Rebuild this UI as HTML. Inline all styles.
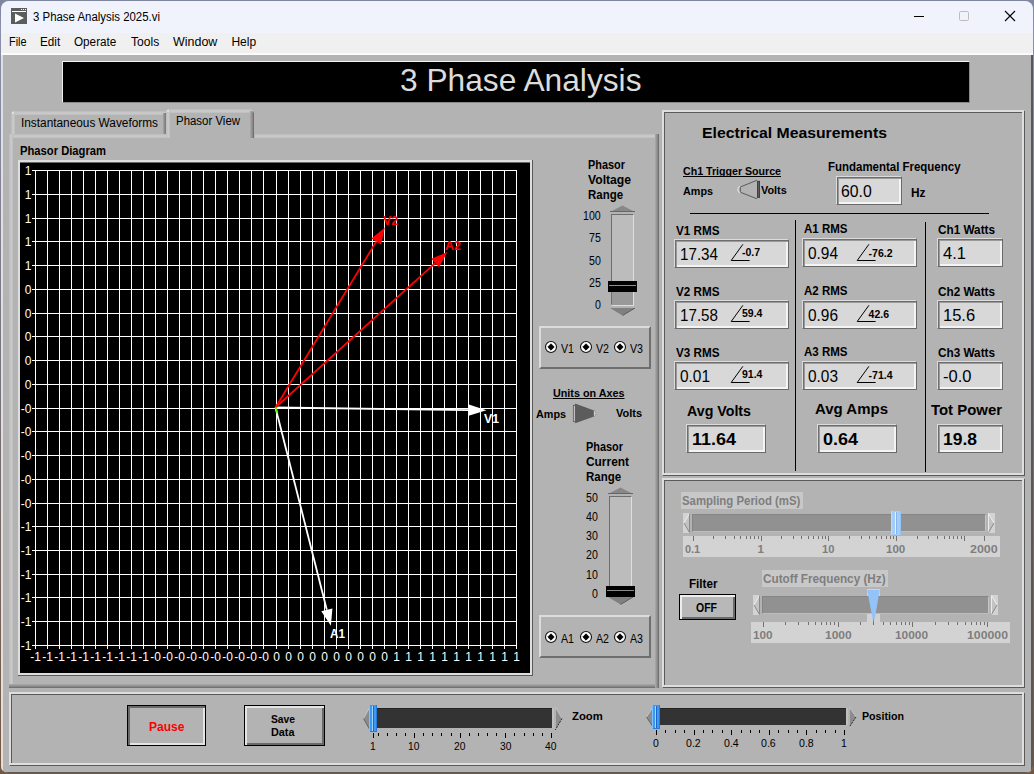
<!DOCTYPE html>
<html lang="en"><head><meta charset="utf-8"><title>3 Phase Analysis 2025.vi</title>
<style>
html,body{margin:0;padding:0;}
body{width:1034px;height:774px;overflow:hidden;position:relative;background:#b3b3b3;font-family:"Liberation Sans",sans-serif;}
#w{position:absolute;left:0;top:0;width:1034px;height:774px;overflow:hidden;}
#w div,#w svg,#w span{position:absolute;}
.t{white-space:pre;transform-origin:0 50%;display:block;}
</style></head><body><div id="w">
<div style="left:0px;top:0px;width:1034px;height:774px;background:linear-gradient(#7d869c 0,#8a90aa 30px,#77727c 50%,#76573f 100%);"></div>
<div style="left:1px;top:1px;width:1032px;height:772px;border-radius:8px 8px 7px 7px;overflow:hidden;background:#b3b3b3;">
<div style="left:0px;top:0px;width:1032px;height:32px;background:#f0f3fb;"></div>
<div style="left:0px;top:32px;width:1032px;height:21px;background:#f0f0f0;"></div>
<div style="left:0px;top:52px;width:1032px;height:2px;background:#fbfbfb;"></div>
<div style="left:0px;top:54px;width:2px;height:720px;background:#e0e0e0;"></div>
<div style="left:1030px;top:54px;width:2px;height:720px;background:#585858;"></div>
<div style="left:0px;top:771px;width:1032px;height:1px;background:#5a5a5a;"></div>
</div>
<svg style="left:11px;top:8px;" width="16" height="16" viewBox="0 0 16 16"><rect width="16" height="16" fill="#5c5c5c"/><rect x="1" y="3" width="14" height="1" fill="#fff"/><rect x="10" y="1" width="1" height="1" fill="#fff"/><rect x="12" y="1" width="1" height="1" fill="#fff"/><rect x="14" y="1" width="1" height="1" fill="#fff"/><path d="M4 5.5 L13 10 L4 14.5 Z" fill="#fff"/></svg>
<span class="t" style="left:33.20px;top:11px;font-size:12px;line-height:12px;color:#000;transform:scaleX(0.9519);">3 Phase Analysis 2025.vi</span>
<svg style="left:905px;top:6px;" width="120" height="20" viewBox="0 0 120 20"><rect x="9" y="10" width="10" height="1" fill="#000"/><rect x="54.5" y="5.5" width="9" height="9" rx="1.2" fill="none" stroke="#bdbdbd" stroke-width="1"/><path d="M100 5 L110 15 M110 5 L100 15" stroke="#000" stroke-width="1.1" fill="none"/></svg>
<span class="t" style="left:8.50px;top:36px;font-size:12px;line-height:12px;color:#000;transform:scaleX(0.9051);">File</span>
<span class="t" style="left:40.20px;top:36px;font-size:12px;line-height:12px;color:#000;transform:scaleX(0.9769);">Edit</span>
<span class="t" style="left:74.40px;top:36px;font-size:12px;line-height:12px;color:#000;transform:scaleX(0.9756);">Operate</span>
<span class="t" style="left:130.80px;top:36px;font-size:12px;line-height:12px;color:#000;transform:scaleX(1.0067);">Tools</span>
<span class="t" style="left:173.00px;top:36px;font-size:12px;line-height:12px;color:#000;transform:scaleX(1.0380);">Window</span>
<span class="t" style="left:231.40px;top:36px;font-size:12px;line-height:12px;color:#000;">Help</span>
<div style="left:62px;top:61px;width:908px;height:42px;background:#000;border-left:1px solid #eee;border-top:1px solid #f2f2f2;border-right:1px solid #8a8a8a;border-bottom:1px solid #8a8a8a;box-sizing:border-box;"></div>
<span class="t" style="left:399.80px;top:65px;font-size:31.5px;line-height:31.5px;color:#dcdcdc;transform:scaleX(1.0067);">3 Phase Analysis</span>
<div style="left:9px;top:134px;width:650px;height:4px;background:linear-gradient(to bottom,#bababa,#c6c6c6,#c9c9c9,#bcbcbc);"></div>
<div style="left:9px;top:134px;width:4px;height:554px;background:linear-gradient(to right,#bababa,#c6c6c6,#c9c9c9,#bcbcbc);"></div>
<div style="left:9px;top:684px;width:650px;height:4px;background:linear-gradient(to bottom,#ababab,#999,#858585,#666);"></div>
<div style="left:655px;top:134px;width:4px;height:554px;background:linear-gradient(to right,#ababab,#999,#858585,#666);"></div>
<div style="left:11px;top:111px;width:155px;height:4px;background:linear-gradient(to bottom,#bababa,#c6c6c6,#c9c9c9,#bcbcbc);border-radius:3px 0 0 0;"></div>
<div style="left:11px;top:111px;width:4px;height:23px;background:linear-gradient(to right,#bababa,#c6c6c6,#c9c9c9,#bcbcbc);border-radius:3px 0 0 0;"></div>
<div style="left:12px;top:112px;width:2px;height:2px;background:#e4e4e4;border-radius:1px;"></div>
<div style="left:163px;top:113px;width:3px;height:21px;background:linear-gradient(to right,#a5a5a5,#8c8c8c,#777);"></div>
<div style="left:166px;top:109px;width:89px;height:29px;background:#b3b3b3;border-radius:3px 3px 0 0;"></div>
<div style="left:166px;top:109px;width:87px;height:4px;background:linear-gradient(to bottom,#bababa,#c6c6c6,#c9c9c9,#bcbcbc);border-radius:3px 3px 0 0;"></div>
<div style="left:166px;top:109px;width:4px;height:29px;background:linear-gradient(to right,#bababa,#c6c6c6,#c9c9c9,#bcbcbc);border-radius:3px 0 0 0;"></div>
<div style="left:167px;top:110px;width:2px;height:2px;background:#e4e4e4;border-radius:1px;"></div>
<div style="left:250px;top:111px;width:4px;height:27px;background:linear-gradient(to right,#ababab,#999,#858585,#666);border-radius:0 3px 0 0;"></div>
<span class="t" style="left:21.00px;top:117px;font-size:12px;line-height:12px;color:#000;transform:scaleX(0.9859);">Instantaneous Waveforms</span>
<span class="t" style="left:176.00px;top:115px;font-size:12px;line-height:12px;color:#000;transform:scaleX(0.9531);">Phasor View</span>
<span class="t" style="left:19.80px;top:145px;font-size:12px;line-height:12px;color:#000;font-weight:bold;transform:scaleX(0.9344);">Phasor Diagram</span>
<div style="left:18px;top:160px;width:515px;height:516px;background:#5a5a5a;"></div>
<div style="left:18px;top:160px;width:514px;height:515px;background:#dedede;"></div>
<div style="left:20px;top:162px;width:510px;height:511px;background:#000;border-top:1px solid #6a6a6a;box-sizing:border-box;"></div>
<svg style="left:0px;top:0px;pointer-events:none;" width="1034" height="774" viewBox="0 0 1034 774"><path d="M35.5 170V649M47.5 170V649M59.5 170V649M71.5 170V649M83.5 170V649M95.5 170V649M107.5 170V649M119.5 170V649M131.5 170V649M143.5 170V649M155.5 170V649M167.5 170V649M179.5 170V649M191.5 170V649M203.5 170V649M215.5 170V649M227.5 170V649M239.5 170V649M251.5 170V649M263.5 170V649M276.5 170V649M288.5 170V649M300.5 170V649M312.5 170V649M324.5 170V649M336.5 170V649M348.5 170V649M360.5 170V649M372.5 170V649M384.5 170V649M396.5 170V649M408.5 170V649M420.5 170V649M432.5 170V649M444.5 170V649M456.5 170V649M468.5 170V649M480.5 170V649M492.5 170V649M504.5 170V649M516.5 170V649M32 170.5H517M32 194.5H517M32 218.5H517M32 241.5H517M32 265.5H517M32 289.5H517M32 313.5H517M32 336.5H517M32 360.5H517M32 384.5H517M32 408.5H517M32 431.5H517M32 455.5H517M32 479.5H517M32 503.5H517M32 526.5H517M32 550.5H517M32 574.5H517M32 597.5H517M32 621.5H517M32 645.5H517" stroke="#fff" stroke-width="1" fill="none" shape-rendering="crispEdges"/><path d="M275.5 407.5L468.8 410.1" stroke="#fff" stroke-width="1.8" fill="none"/><path d="M486.4 410.3L468.7 415.8L468.9 404.4Z" fill="#fff"/><path d="M275.5 407.5L326.8 609.8" stroke="#fff" stroke-width="1.8" fill="none"/><path d="M330.9 625.8L321.3 611.2L332.4 608.4Z" fill="#fff"/><path d="M275.5 407.5L376.2 241.6" stroke="#f00" stroke-width="1.8" fill="none"/><path d="M384.8 227.5L381.1 244.6L371.4 238.6Z" fill="#f00"/><path d="M275.5 407.5L435.2 263.1" stroke="#f00" stroke-width="1.8" fill="none"/><path d="M447.4 252.0L439.0 267.3L431.3 258.8Z" fill="#f00"/><path d="M275.6 407.3 L277.4 413" stroke="#5f0" stroke-width="1.8" fill="none"/></svg>
<span class="t" style="left:24.83px;top:165px;font-size:12px;line-height:12px;color:#fff;">1</span>
<span class="t" style="left:24.83px;top:189px;font-size:12px;line-height:12px;color:#fff;">1</span>
<span class="t" style="left:24.83px;top:213px;font-size:12px;line-height:12px;color:#fff;">1</span>
<span class="t" style="left:24.83px;top:236px;font-size:12px;line-height:12px;color:#fff;">1</span>
<span class="t" style="left:24.83px;top:260px;font-size:12px;line-height:12px;color:#fff;">1</span>
<span class="t" style="left:24.83px;top:284px;font-size:12px;line-height:12px;color:#fff;">0</span>
<span class="t" style="left:24.83px;top:308px;font-size:12px;line-height:12px;color:#fff;">0</span>
<span class="t" style="left:24.83px;top:331px;font-size:12px;line-height:12px;color:#fff;">0</span>
<span class="t" style="left:24.83px;top:355px;font-size:12px;line-height:12px;color:#fff;">0</span>
<span class="t" style="left:24.83px;top:379px;font-size:12px;line-height:12px;color:#fff;">0</span>
<span class="t" style="left:20.83px;top:403px;font-size:12px;line-height:12px;color:#fff;">-0</span>
<span class="t" style="left:20.83px;top:426px;font-size:12px;line-height:12px;color:#fff;">-0</span>
<span class="t" style="left:20.83px;top:450px;font-size:12px;line-height:12px;color:#fff;">-0</span>
<span class="t" style="left:20.83px;top:474px;font-size:12px;line-height:12px;color:#fff;">-0</span>
<span class="t" style="left:20.83px;top:498px;font-size:12px;line-height:12px;color:#fff;">-0</span>
<span class="t" style="left:20.83px;top:521px;font-size:12px;line-height:12px;color:#fff;">-1</span>
<span class="t" style="left:20.83px;top:545px;font-size:12px;line-height:12px;color:#fff;">-1</span>
<span class="t" style="left:20.83px;top:569px;font-size:12px;line-height:12px;color:#fff;">-1</span>
<span class="t" style="left:20.83px;top:592px;font-size:12px;line-height:12px;color:#fff;">-1</span>
<span class="t" style="left:20.83px;top:616px;font-size:12px;line-height:12px;color:#fff;">-1</span>
<span class="t" style="left:20.83px;top:640px;font-size:12px;line-height:12px;color:#fff;">-1</span>
<span class="t" style="left:30.17px;top:651px;font-size:12px;line-height:12px;color:#fff;">-1</span>
<span class="t" style="left:42.17px;top:651px;font-size:12px;line-height:12px;color:#fff;">-1</span>
<span class="t" style="left:54.17px;top:651px;font-size:12px;line-height:12px;color:#fff;">-1</span>
<span class="t" style="left:66.17px;top:651px;font-size:12px;line-height:12px;color:#fff;">-1</span>
<span class="t" style="left:78.17px;top:651px;font-size:12px;line-height:12px;color:#fff;">-1</span>
<span class="t" style="left:90.17px;top:651px;font-size:12px;line-height:12px;color:#fff;">-1</span>
<span class="t" style="left:102.17px;top:651px;font-size:12px;line-height:12px;color:#fff;">-1</span>
<span class="t" style="left:114.17px;top:651px;font-size:12px;line-height:12px;color:#fff;">-1</span>
<span class="t" style="left:126.17px;top:651px;font-size:12px;line-height:12px;color:#fff;">-1</span>
<span class="t" style="left:138.17px;top:651px;font-size:12px;line-height:12px;color:#fff;">-1</span>
<span class="t" style="left:150.17px;top:651px;font-size:12px;line-height:12px;color:#fff;">-0</span>
<span class="t" style="left:162.17px;top:651px;font-size:12px;line-height:12px;color:#fff;">-0</span>
<span class="t" style="left:174.17px;top:651px;font-size:12px;line-height:12px;color:#fff;">-0</span>
<span class="t" style="left:186.17px;top:651px;font-size:12px;line-height:12px;color:#fff;">-0</span>
<span class="t" style="left:198.17px;top:651px;font-size:12px;line-height:12px;color:#fff;">-0</span>
<span class="t" style="left:210.17px;top:651px;font-size:12px;line-height:12px;color:#fff;">-0</span>
<span class="t" style="left:222.17px;top:651px;font-size:12px;line-height:12px;color:#fff;">-0</span>
<span class="t" style="left:234.17px;top:651px;font-size:12px;line-height:12px;color:#fff;">-0</span>
<span class="t" style="left:246.17px;top:651px;font-size:12px;line-height:12px;color:#fff;">-0</span>
<span class="t" style="left:258.17px;top:651px;font-size:12px;line-height:12px;color:#fff;">-0</span>
<span class="t" style="left:273.16px;top:651px;font-size:12px;line-height:12px;color:#fff;">0</span>
<span class="t" style="left:285.16px;top:651px;font-size:12px;line-height:12px;color:#fff;">0</span>
<span class="t" style="left:297.16px;top:651px;font-size:12px;line-height:12px;color:#fff;">0</span>
<span class="t" style="left:309.16px;top:651px;font-size:12px;line-height:12px;color:#fff;">0</span>
<span class="t" style="left:321.16px;top:651px;font-size:12px;line-height:12px;color:#fff;">0</span>
<span class="t" style="left:333.16px;top:651px;font-size:12px;line-height:12px;color:#fff;">0</span>
<span class="t" style="left:345.16px;top:651px;font-size:12px;line-height:12px;color:#fff;">0</span>
<span class="t" style="left:357.16px;top:651px;font-size:12px;line-height:12px;color:#fff;">0</span>
<span class="t" style="left:369.16px;top:651px;font-size:12px;line-height:12px;color:#fff;">0</span>
<span class="t" style="left:381.16px;top:651px;font-size:12px;line-height:12px;color:#fff;">0</span>
<span class="t" style="left:393.16px;top:651px;font-size:12px;line-height:12px;color:#fff;">1</span>
<span class="t" style="left:405.16px;top:651px;font-size:12px;line-height:12px;color:#fff;">1</span>
<span class="t" style="left:417.16px;top:651px;font-size:12px;line-height:12px;color:#fff;">1</span>
<span class="t" style="left:429.16px;top:651px;font-size:12px;line-height:12px;color:#fff;">1</span>
<span class="t" style="left:441.16px;top:651px;font-size:12px;line-height:12px;color:#fff;">1</span>
<span class="t" style="left:453.16px;top:651px;font-size:12px;line-height:12px;color:#fff;">1</span>
<span class="t" style="left:465.16px;top:651px;font-size:12px;line-height:12px;color:#fff;">1</span>
<span class="t" style="left:477.16px;top:651px;font-size:12px;line-height:12px;color:#fff;">1</span>
<span class="t" style="left:489.16px;top:651px;font-size:12px;line-height:12px;color:#fff;">1</span>
<span class="t" style="left:501.16px;top:651px;font-size:12px;line-height:12px;color:#fff;">1</span>
<span class="t" style="left:513.16px;top:651px;font-size:12px;line-height:12px;color:#fff;">1</span>
<span class="t" style="left:383.30px;top:215px;font-size:12px;line-height:12px;color:#f00;font-weight:bold;transform:scaleX(1.0424);">V2</span>
<span class="t" style="left:445.00px;top:240px;font-size:12px;line-height:12px;color:#f00;font-weight:bold;transform:scaleX(1.0430);">A2</span>
<span class="t" style="left:484.00px;top:413px;font-size:12px;line-height:12px;color:#fff;font-weight:bold;transform:scaleX(1.0220);">V1</span>
<span class="t" style="left:330.00px;top:628px;font-size:12px;line-height:12px;color:#fff;font-weight:bold;transform:scaleX(0.9778);">A1</span>
<span class="t" style="left:588.00px;top:159px;font-size:12px;line-height:12px;color:#000;font-weight:bold;transform:scaleX(0.9095);">Phasor</span>
<span class="t" style="left:588.00px;top:174px;font-size:12px;line-height:12px;color:#000;font-weight:bold;transform:scaleX(1.0129);">Voltage</span>
<span class="t" style="left:588.00px;top:189px;font-size:12px;line-height:12px;color:#000;font-weight:bold;transform:scaleX(0.9544);">Range</span>
<div style="left:611px;top:214px;width:23px;height:92px;background:#bcbcbc;box-sizing:border-box;border-left:1px solid #6e6e6e;border-top:1px solid #6e6e6e;border-right:1px solid #dedede;border-bottom:2px solid #dedede;"></div>
<div style="left:612px;top:292px;width:21px;height:13px;background:#999;"></div>
<svg style="left:610px;top:205px;" width="25" height="8" viewBox="0 0 25 8"><path d="M12.5 0.5 L25 7 L0 7 Z" fill="#888"/><path d="M0 6.5 H25" stroke="#666" stroke-width="1"/></svg>
<svg style="left:610px;top:308px;" width="25" height="8" viewBox="0 0 25 8"><path d="M0 0 L25 0 L12.5 7.5 Z" fill="#808080"/><path d="M12.5 7.5 L25 0" stroke="#5a5a5a" stroke-width="1"/></svg>
<div style="left:608px;top:281px;width:29px;height:11px;background:#000;"></div>
<div style="left:609px;top:285px;width:27px;height:1px;background:#8c8c8c;"></div>
<span class="t" style="left:583.00px;top:210px;font-size:12px;line-height:12px;color:#000;transform:scaleX(0.8841);">100</span>
<span class="t" style="left:588.90px;top:232px;font-size:12px;line-height:12px;color:#000;transform:scaleX(0.8841);">75</span>
<span class="t" style="left:588.90px;top:255px;font-size:12px;line-height:12px;color:#000;transform:scaleX(0.8841);">50</span>
<span class="t" style="left:588.90px;top:277px;font-size:12px;line-height:12px;color:#000;transform:scaleX(0.8841);">25</span>
<span class="t" style="left:594.80px;top:299px;font-size:12px;line-height:12px;color:#000;transform:scaleX(0.8841);">0</span>
<div style="left:539px;top:326px;width:112px;height:43px;box-sizing:border-box;border-top:2px solid #dcdcdc;border-left:2px solid #dcdcdc;border-right:2px solid #6e6e6e;border-bottom:2px solid #6e6e6e;"></div>
<svg style="left:544px;top:340px;" width="14" height="14" viewBox="0 0 14 14"><circle cx="7" cy="7" r="5.5" fill="#fff" stroke="#111" stroke-width="1.1"/><path d="M7 3.8 L10.2 7 L7 10.2 L3.8 7 Z" fill="#000" stroke="#000" stroke-width="0.8" stroke-linejoin="round"/></svg>
<span class="t" style="left:561.00px;top:343px;font-size:12px;line-height:12px;color:#000;transform:scaleX(0.8857);">V1</span>
<svg style="left:578.8px;top:340px;" width="14" height="14" viewBox="0 0 14 14"><circle cx="7" cy="7" r="5.5" fill="#fff" stroke="#111" stroke-width="1.1"/><path d="M7 3.8 L10.2 7 L7 10.2 L3.8 7 Z" fill="#000" stroke="#000" stroke-width="0.8" stroke-linejoin="round"/></svg>
<span class="t" style="left:596.00px;top:343px;font-size:12px;line-height:12px;color:#000;transform:scaleX(0.8857);">V2</span>
<svg style="left:613px;top:340px;" width="14" height="14" viewBox="0 0 14 14"><circle cx="7" cy="7" r="5.5" fill="#fff" stroke="#111" stroke-width="1.1"/><path d="M7 3.8 L10.2 7 L7 10.2 L3.8 7 Z" fill="#000" stroke="#000" stroke-width="0.8" stroke-linejoin="round"/></svg>
<span class="t" style="left:630.00px;top:343px;font-size:12px;line-height:12px;color:#000;transform:scaleX(0.8857);">V3</span>
<div style="left:539px;top:615px;width:112px;height:43px;box-sizing:border-box;border-top:2px solid #dcdcdc;border-left:2px solid #dcdcdc;border-right:2px solid #6e6e6e;border-bottom:2px solid #6e6e6e;"></div>
<svg style="left:544px;top:630px;" width="14" height="14" viewBox="0 0 14 14"><circle cx="7" cy="7" r="5.5" fill="#fff" stroke="#111" stroke-width="1.1"/><path d="M7 3.8 L10.2 7 L7 10.2 L3.8 7 Z" fill="#000" stroke="#000" stroke-width="0.8" stroke-linejoin="round"/></svg>
<span class="t" style="left:561.00px;top:633px;font-size:12px;line-height:12px;color:#000;transform:scaleX(0.8857);">A1</span>
<svg style="left:578.8px;top:630px;" width="14" height="14" viewBox="0 0 14 14"><circle cx="7" cy="7" r="5.5" fill="#fff" stroke="#111" stroke-width="1.1"/><path d="M7 3.8 L10.2 7 L7 10.2 L3.8 7 Z" fill="#000" stroke="#000" stroke-width="0.8" stroke-linejoin="round"/></svg>
<span class="t" style="left:596.00px;top:633px;font-size:12px;line-height:12px;color:#000;transform:scaleX(0.8857);">A2</span>
<svg style="left:613px;top:630px;" width="14" height="14" viewBox="0 0 14 14"><circle cx="7" cy="7" r="5.5" fill="#fff" stroke="#111" stroke-width="1.1"/><path d="M7 3.8 L10.2 7 L7 10.2 L3.8 7 Z" fill="#000" stroke="#000" stroke-width="0.8" stroke-linejoin="round"/></svg>
<span class="t" style="left:630.00px;top:633px;font-size:12px;line-height:12px;color:#000;transform:scaleX(0.8857);">A3</span>
<span class="t" style="left:553.30px;top:388px;font-size:11px;line-height:11px;color:#000;font-weight:bold;transform:scaleX(0.9803);text-decoration:underline;text-decoration-skip-ink:none;">Units on Axes</span>
<span class="t" style="left:536.30px;top:409px;font-size:11px;line-height:11px;color:#000;font-weight:bold;transform:scaleX(0.9817);">Amps</span>
<span class="t" style="left:616.00px;top:408px;font-size:11px;line-height:11px;color:#000;font-weight:bold;">Volts</span>
<svg style="left:572px;top:402px;" width="28" height="24" viewBox="0 0 28 24"><path d="M3.3 2 L21.7 8.8 V14.2 L3.3 20.8 Z" fill="#5c5c5c" stroke="#4a4a4a" stroke-width="0.6"/><rect x="1.3" y="3.3" width="2" height="16.2" fill="#c4c4c4" stroke="#4f4f4f" stroke-width="0.7"/><path d="M21.9 8.3 A3 3.4 0 0 1 21.9 14.7" fill="#cfcfcf" stroke="#666" stroke-width="0.7" stroke-dasharray="1.2 1"/></svg>
<span class="t" style="left:586.00px;top:441px;font-size:12px;line-height:12px;color:#000;font-weight:bold;transform:scaleX(0.9095);">Phasor</span>
<span class="t" style="left:586.00px;top:456px;font-size:12px;line-height:12px;color:#000;font-weight:bold;transform:scaleX(0.9922);">Current</span>
<span class="t" style="left:586.00px;top:471px;font-size:12px;line-height:12px;color:#000;font-weight:bold;transform:scaleX(0.9544);">Range</span>
<div style="left:609px;top:496px;width:23px;height:102px;background:#bcbcbc;box-sizing:border-box;border-left:1px solid #6e6e6e;border-top:1px solid #6e6e6e;border-right:1px solid #dedede;border-bottom:2px solid #dedede;"></div>
<svg style="left:608px;top:487px;" width="25" height="8" viewBox="0 0 25 8"><path d="M12.5 0.5 L25 7 L0 7 Z" fill="#888"/><path d="M0 6.5 H25" stroke="#666" stroke-width="1"/></svg>
<svg style="left:608px;top:597px;" width="25" height="8" viewBox="0 0 25 8"><path d="M0 0 L25 0 L12.5 7.5 Z" fill="#808080"/><path d="M12.5 7.5 L25 0" stroke="#5a5a5a" stroke-width="1"/></svg>
<div style="left:606px;top:586px;width:29px;height:11px;background:#000;"></div>
<div style="left:607px;top:590px;width:27px;height:1px;background:#8c8c8c;"></div>
<span class="t" style="left:586.40px;top:492px;font-size:12px;line-height:12px;color:#000;transform:scaleX(0.8841);">50</span>
<span class="t" style="left:586.40px;top:511px;font-size:12px;line-height:12px;color:#000;transform:scaleX(0.8841);">40</span>
<span class="t" style="left:586.40px;top:530px;font-size:12px;line-height:12px;color:#000;transform:scaleX(0.8841);">30</span>
<span class="t" style="left:586.40px;top:549px;font-size:12px;line-height:12px;color:#000;transform:scaleX(0.8841);">20</span>
<span class="t" style="left:586.40px;top:569px;font-size:12px;line-height:12px;color:#000;transform:scaleX(0.8841);">10</span>
<span class="t" style="left:592.30px;top:588px;font-size:12px;line-height:12px;color:#000;transform:scaleX(0.8841);">0</span>
<div style="left:662px;top:110px;width:362px;height:365px;box-sizing:border-box;border:2px solid #dedede;box-shadow:1px 1px 0 #5a5a5a,inset 1px 1px 0 #5a5a5a;"></div>
<div style="left:662px;top:478px;width:362px;height:209px;box-sizing:border-box;border:2px solid #dedede;box-shadow:1px 1px 0 #5a5a5a,inset 1px 1px 0 #5a5a5a;"></div>
<span class="t" style="left:702.00px;top:125px;font-size:15.5px;line-height:15.5px;color:#000;font-weight:bold;transform:scaleX(1.0176);">Electrical Measurements</span>
<span class="t" style="left:683.00px;top:166px;font-size:11px;line-height:11px;color:#000;font-weight:bold;transform:scaleX(0.9658);text-decoration:underline;text-decoration-skip-ink:none;">Ch1 Trigger Source</span>
<span class="t" style="left:683.00px;top:186px;font-size:11px;line-height:11px;color:#000;font-weight:bold;transform:scaleX(0.9817);">Amps</span>
<span class="t" style="left:761.00px;top:185px;font-size:11px;line-height:11px;color:#000;font-weight:bold;transform:scaleX(0.9893);">Volts</span>
<svg style="left:734px;top:178px;" width="28" height="24" viewBox="0 0 28 24"><path d="M23 2.2 L6.3 9 V14.2 L23 20.8" fill="none" stroke="#505050" stroke-width="0.9"/><rect x="23.4" y="3.3" width="2.2" height="16.2" fill="#5c5c5c" stroke="#333" stroke-width="0.8"/><path d="M6.1 8.4 A3.4 3.4 0 0 0 6.1 14.8" fill="none" stroke="#dadada" stroke-width="1.3"/></svg>
<span class="t" style="left:827.50px;top:161px;font-size:12px;line-height:12px;color:#000;font-weight:bold;transform:scaleX(0.9554);">Fundamental Frequency</span>
<div style="left:836px;top:176px;width:66px;height:29px;box-sizing:border-box;background:#d8d8d8;border-top:1px solid #dcdcdc;border-left:1px solid #dcdcdc;border-right:1px solid #6a6a6a;border-bottom:1px solid #6a6a6a;box-shadow:inset 1px 1px 0 #6e6e6e,inset 2px 2px 0 #9a9a9a,inset -2px -2px 0 #f4f4f4;"></div>
<span class="t" style="left:841.30px;top:183px;font-size:16.5px;line-height:16.5px;color:#000;transform:scaleX(0.9560);">60.0</span>
<span class="t" style="left:910.50px;top:187px;font-size:12px;line-height:12px;color:#000;font-weight:bold;transform:scaleX(0.9887);">Hz</span>
<div style="left:690px;top:213px;width:299px;height:1px;background:#000;"></div>
<div style="left:795px;top:220px;width:1px;height:251px;background:#000;"></div>
<div style="left:925px;top:222px;width:1px;height:250px;background:#000;"></div>
<span class="t" style="left:676.00px;top:225px;font-size:12px;line-height:12px;color:#000;font-weight:bold;transform:scaleX(0.9736);">V1 RMS</span>
<div style="left:674px;top:239px;width:115px;height:29px;box-sizing:border-box;background:#d8d8d8;border-top:1px solid #dcdcdc;border-left:1px solid #dcdcdc;border-right:1px solid #6a6a6a;border-bottom:1px solid #6a6a6a;box-shadow:inset 1px 1px 0 #6e6e6e,inset 2px 2px 0 #9a9a9a,inset -2px -2px 0 #f4f4f4;"></div>
<span class="t" style="left:680.30px;top:246px;font-size:16.5px;line-height:16.5px;color:#000;transform:scaleX(0.9204);">17.34</span>
<svg style="left:729px;top:244px;" width="22" height="18" viewBox="0 0 22 18"><path d="M13.9 0.3 L2.2 16.5 H20.6" fill="none" stroke="#000" stroke-width="1"/></svg>
<span class="t" style="left:742.00px;top:247px;font-size:10.5px;line-height:10.5px;color:#000;font-weight:bold;">-0.7</span>
<span class="t" style="left:803.50px;top:223px;font-size:12px;line-height:12px;color:#000;font-weight:bold;transform:scaleX(0.9594);">A1 RMS</span>
<div style="left:802px;top:238px;width:115px;height:29px;box-sizing:border-box;background:#d8d8d8;border-top:1px solid #dcdcdc;border-left:1px solid #dcdcdc;border-right:1px solid #6a6a6a;border-bottom:1px solid #6a6a6a;box-shadow:inset 1px 1px 0 #6e6e6e,inset 2px 2px 0 #9a9a9a,inset -2px -2px 0 #f4f4f4;"></div>
<span class="t" style="left:807.50px;top:245px;font-size:16.5px;line-height:16.5px;color:#000;transform:scaleX(0.9342);">0.94</span>
<svg style="left:855px;top:244px;" width="22" height="18" viewBox="0 0 22 18"><path d="M13.9 0.3 L2.2 16.5 H20.6" fill="none" stroke="#000" stroke-width="1"/></svg>
<span class="t" style="left:868.60px;top:248px;font-size:10.5px;line-height:10.5px;color:#000;font-weight:bold;">-76.2</span>
<span class="t" style="left:938.00px;top:224px;font-size:12px;line-height:12px;color:#000;font-weight:bold;transform:scaleX(0.9790);">Ch1 Watts</span>
<div style="left:937px;top:238px;width:66px;height:29px;box-sizing:border-box;background:#d8d8d8;border-top:1px solid #dcdcdc;border-left:1px solid #dcdcdc;border-right:1px solid #6a6a6a;border-bottom:1px solid #6a6a6a;box-shadow:inset 1px 1px 0 #6e6e6e,inset 2px 2px 0 #9a9a9a,inset -2px -2px 0 #f4f4f4;"></div>
<span class="t" style="left:943.00px;top:245px;font-size:16.5px;line-height:16.5px;color:#000;">4.1</span>
<span class="t" style="left:676.00px;top:286px;font-size:12px;line-height:12px;color:#000;font-weight:bold;transform:scaleX(0.9736);">V2 RMS</span>
<div style="left:674px;top:300px;width:115px;height:29px;box-sizing:border-box;background:#d8d8d8;border-top:1px solid #dcdcdc;border-left:1px solid #dcdcdc;border-right:1px solid #6a6a6a;border-bottom:1px solid #6a6a6a;box-shadow:inset 1px 1px 0 #6e6e6e,inset 2px 2px 0 #9a9a9a,inset -2px -2px 0 #f4f4f4;"></div>
<span class="t" style="left:680.30px;top:307px;font-size:16.5px;line-height:16.5px;color:#000;transform:scaleX(0.9204);">17.58</span>
<svg style="left:729px;top:305px;" width="22" height="18" viewBox="0 0 22 18"><path d="M13.9 0.3 L2.2 16.5 H20.6" fill="none" stroke="#000" stroke-width="1"/></svg>
<span class="t" style="left:742.00px;top:308px;font-size:10.5px;line-height:10.5px;color:#000;font-weight:bold;">59.4</span>
<span class="t" style="left:803.50px;top:285px;font-size:12px;line-height:12px;color:#000;font-weight:bold;transform:scaleX(0.9594);">A2 RMS</span>
<div style="left:802px;top:300px;width:115px;height:29px;box-sizing:border-box;background:#d8d8d8;border-top:1px solid #dcdcdc;border-left:1px solid #dcdcdc;border-right:1px solid #6a6a6a;border-bottom:1px solid #6a6a6a;box-shadow:inset 1px 1px 0 #6e6e6e,inset 2px 2px 0 #9a9a9a,inset -2px -2px 0 #f4f4f4;"></div>
<span class="t" style="left:807.50px;top:307px;font-size:16.5px;line-height:16.5px;color:#000;transform:scaleX(0.9342);">0.96</span>
<svg style="left:855px;top:305px;" width="22" height="18" viewBox="0 0 22 18"><path d="M13.9 0.3 L2.2 16.5 H20.6" fill="none" stroke="#000" stroke-width="1"/></svg>
<span class="t" style="left:868.60px;top:309px;font-size:10.5px;line-height:10.5px;color:#000;font-weight:bold;">42.6</span>
<span class="t" style="left:938.00px;top:286px;font-size:12px;line-height:12px;color:#000;font-weight:bold;transform:scaleX(0.9790);">Ch2 Watts</span>
<div style="left:937px;top:300px;width:66px;height:29px;box-sizing:border-box;background:#d8d8d8;border-top:1px solid #dcdcdc;border-left:1px solid #dcdcdc;border-right:1px solid #6a6a6a;border-bottom:1px solid #6a6a6a;box-shadow:inset 1px 1px 0 #6e6e6e,inset 2px 2px 0 #9a9a9a,inset -2px -2px 0 #f4f4f4;"></div>
<span class="t" style="left:943.00px;top:307px;font-size:16.5px;line-height:16.5px;color:#000;">15.6</span>
<span class="t" style="left:676.00px;top:347px;font-size:12px;line-height:12px;color:#000;font-weight:bold;transform:scaleX(0.9736);">V3 RMS</span>
<div style="left:674px;top:361px;width:115px;height:29px;box-sizing:border-box;background:#d8d8d8;border-top:1px solid #dcdcdc;border-left:1px solid #dcdcdc;border-right:1px solid #6a6a6a;border-bottom:1px solid #6a6a6a;box-shadow:inset 1px 1px 0 #6e6e6e,inset 2px 2px 0 #9a9a9a,inset -2px -2px 0 #f4f4f4;"></div>
<span class="t" style="left:680.30px;top:368px;font-size:16.5px;line-height:16.5px;color:#000;transform:scaleX(0.9342);">0.01</span>
<svg style="left:729px;top:366px;" width="22" height="18" viewBox="0 0 22 18"><path d="M13.9 0.3 L2.2 16.5 H20.6" fill="none" stroke="#000" stroke-width="1"/></svg>
<span class="t" style="left:742.00px;top:369px;font-size:10.5px;line-height:10.5px;color:#000;font-weight:bold;">91.4</span>
<span class="t" style="left:803.50px;top:346px;font-size:12px;line-height:12px;color:#000;font-weight:bold;transform:scaleX(0.9594);">A3 RMS</span>
<div style="left:802px;top:361px;width:115px;height:29px;box-sizing:border-box;background:#d8d8d8;border-top:1px solid #dcdcdc;border-left:1px solid #dcdcdc;border-right:1px solid #6a6a6a;border-bottom:1px solid #6a6a6a;box-shadow:inset 1px 1px 0 #6e6e6e,inset 2px 2px 0 #9a9a9a,inset -2px -2px 0 #f4f4f4;"></div>
<span class="t" style="left:807.50px;top:368px;font-size:16.5px;line-height:16.5px;color:#000;transform:scaleX(0.9342);">0.03</span>
<svg style="left:855px;top:366px;" width="22" height="18" viewBox="0 0 22 18"><path d="M13.9 0.3 L2.2 16.5 H20.6" fill="none" stroke="#000" stroke-width="1"/></svg>
<span class="t" style="left:868.60px;top:370px;font-size:10.5px;line-height:10.5px;color:#000;font-weight:bold;">-71.4</span>
<span class="t" style="left:938.00px;top:347px;font-size:12px;line-height:12px;color:#000;font-weight:bold;transform:scaleX(0.9790);">Ch3 Watts</span>
<div style="left:937px;top:361px;width:66px;height:29px;box-sizing:border-box;background:#d8d8d8;border-top:1px solid #dcdcdc;border-left:1px solid #dcdcdc;border-right:1px solid #6a6a6a;border-bottom:1px solid #6a6a6a;box-shadow:inset 1px 1px 0 #6e6e6e,inset 2px 2px 0 #9a9a9a,inset -2px -2px 0 #f4f4f4;"></div>
<span class="t" style="left:943.00px;top:368px;font-size:16.5px;line-height:16.5px;color:#000;">-0.0</span>
<span class="t" style="left:687.30px;top:404px;font-size:14px;line-height:14px;color:#000;font-weight:bold;transform:scaleX(1.0157);">Avg Volts</span>
<div style="left:686px;top:424px;width:80px;height:29px;box-sizing:border-box;background:#d8d8d8;border-top:1px solid #dcdcdc;border-left:1px solid #dcdcdc;border-right:1px solid #6a6a6a;border-bottom:1px solid #6a6a6a;box-shadow:inset 1px 1px 0 #6e6e6e,inset 2px 2px 0 #9a9a9a,inset -2px -2px 0 #f4f4f4;"></div>
<span class="t" style="left:691.70px;top:432px;font-size:16px;line-height:16px;color:#000;font-weight:bold;transform:scaleX(1.1237);">11.64</span>
<span class="t" style="left:815.00px;top:402px;font-size:14px;line-height:14px;color:#000;font-weight:bold;transform:scaleX(1.0703);">Avg Amps</span>
<div style="left:817px;top:424px;width:80px;height:29px;box-sizing:border-box;background:#d8d8d8;border-top:1px solid #dcdcdc;border-left:1px solid #dcdcdc;border-right:1px solid #6a6a6a;border-bottom:1px solid #6a6a6a;box-shadow:inset 1px 1px 0 #6e6e6e,inset 2px 2px 0 #9a9a9a,inset -2px -2px 0 #f4f4f4;"></div>
<span class="t" style="left:822.50px;top:432px;font-size:16px;line-height:16px;color:#000;font-weight:bold;transform:scaleX(1.1239);">0.64</span>
<span class="t" style="left:930.70px;top:403px;font-size:14px;line-height:14px;color:#000;font-weight:bold;transform:scaleX(1.0655);">Tot Power</span>
<div style="left:937px;top:424px;width:66px;height:29px;box-sizing:border-box;background:#d8d8d8;border-top:1px solid #dcdcdc;border-left:1px solid #dcdcdc;border-right:1px solid #6a6a6a;border-bottom:1px solid #6a6a6a;box-shadow:inset 1px 1px 0 #6e6e6e,inset 2px 2px 0 #9a9a9a,inset -2px -2px 0 #f4f4f4;"></div>
<span class="t" style="left:943.00px;top:432px;font-size:16px;line-height:16px;color:#000;font-weight:bold;transform:scaleX(1.0918);">19.8</span>
<div style="left:681px;top:492px;width:122px;height:17px;background:#c8c8c8;"></div>
<span class="t" style="left:682.40px;top:495px;font-size:12px;line-height:12px;color:#7e7e7e;font-weight:bold;transform:scaleX(0.9496);">Sampling Period (mS)</span>
<div style="left:683px;top:513px;width:7px;height:20px;background:#d3d3d3;"></div>
<svg style="left:683px;top:513px;" width="7" height="20" viewBox="0 0 7 20"><path d="M6.5 0.5 L1 10.0 L6.5 19.5 Z" fill="#c3c3c3"/><path d="M6.5 0.5 L1 10.0" stroke="#ececec" stroke-width="1" fill="none"/><path d="M1 10.0 L6.5 19.5 V0.5" stroke="#8a8a8a" stroke-width="1" fill="none"/></svg>
<div style="left:988px;top:513px;width:7px;height:20px;background:#d3d3d3;"></div>
<svg style="left:988px;top:513px;" width="7" height="20" viewBox="0 0 7 20"><path d="M0.5 0.5 L6 10.0 L0.5 19.5 Z" fill="#c3c3c3"/><path d="M0.5 19.5 V0.5 L6 10.0" stroke="#ececec" stroke-width="1" fill="none"/><path d="M6 10.0 L0.5 19.5" stroke="#8a8a8a" stroke-width="1" fill="none"/></svg>
<div style="left:692px;top:514px;width:294px;height:18px;background:#919191;box-sizing:border-box;border-top:1px solid #858585;border-left:1px solid #858585;border-bottom:1px solid #bdbdbd;border-right:1px solid #c4c4c4;"></div>
<div style="left:891px;top:511px;width:10px;height:24px;background:#a3cdfb;box-shadow:inset 1px 0 0 #b9dbff,inset -1px 0 0 #94c2f5;"></div>
<div style="left:895px;top:512px;width:1px;height:22px;background:#e2f0ff;"></div>
<div style="left:896px;top:512px;width:1px;height:22px;background:#86b4e8;"></div>
<div style="left:683px;top:536px;width:317px;height:21px;background:#d3d3d3;"></div>
<svg style="left:0px;top:0px;pointer-events:none;" width="1034" height="774" viewBox="0 0 1034 774"><path d="M693.5 536v5M713.5 536v3M725.5 536v3M734.5 536v3M740.5 536v3M746.5 536v3M750.5 536v3M754.5 536v3M758.5 536v3M761.5 536v5M781.5 536v3M793.5 536v3M801.5 536v3M808.5 536v3M813.5 536v3M818.5 536v3M822.5 536v3M825.5 536v3M828.5 536v5M849.5 536v3M861.5 536v3M869.5 536v3M876.5 536v3M881.5 536v3M886.5 536v3M890.5 536v3M893.5 536v3M896.5 536v5M917.5 536v3M928.5 536v3M937.5 536v3M944.5 536v3M949.5 536v3M953.5 536v3M957.5 536v3M961.5 536v3M964.5 536v5M984.5 536v5" stroke="#707070" stroke-width="1" fill="none" shape-rendering="crispEdges"/></svg>
<span class="t" style="left:684.50px;top:544px;font-size:11.5px;line-height:11.5px;color:#7e7e7e;font-weight:bold;transform:scaleX(0.9507);">0.1</span>
<span class="t" style="left:757.40px;top:544px;font-size:11.5px;line-height:11.5px;color:#7e7e7e;font-weight:bold;">1</span>
<span class="t" style="left:822.45px;top:544px;font-size:11.5px;line-height:11.5px;color:#7e7e7e;font-weight:bold;transform:scaleX(0.9771);">10</span>
<span class="t" style="left:886.15px;top:544px;font-size:11.5px;line-height:11.5px;color:#7e7e7e;font-weight:bold;transform:scaleX(1.0058);">100</span>
<span class="t" style="left:970.00px;top:544px;font-size:11.5px;line-height:11.5px;color:#7e7e7e;font-weight:bold;transform:scaleX(1.0826);">2000</span>
<span class="t" style="left:689.00px;top:578px;font-size:12px;line-height:12px;color:#000;font-weight:bold;transform:scaleX(0.9714);">Filter</span>
<div style="left:679px;top:594px;width:57px;height:26px;box-sizing:border-box;border:1px solid #000;background:#b8b8b8;box-shadow:inset 2px 2px 0 #eee,inset -2px -2px 0 #6a6a6a;"></div>
<span class="t" style="left:695.80px;top:602px;font-size:12px;line-height:12px;color:#000;font-weight:bold;transform:scaleX(0.8752);">OFF</span>
<div style="left:762px;top:570px;width:126px;height:17px;background:#c8c8c8;"></div>
<span class="t" style="left:763.10px;top:573px;font-size:12px;line-height:12px;color:#7e7e7e;font-weight:bold;transform:scaleX(0.9782);">Cutoff Frequency (Hz)</span>
<div style="left:867px;top:589px;width:13px;height:33px;background:#d3d3d3;"></div>
<div style="left:753px;top:595px;width:7px;height:20px;background:#d3d3d3;"></div>
<svg style="left:753px;top:595px;" width="7" height="20" viewBox="0 0 7 20"><path d="M6.5 0.5 L1 10.0 L6.5 19.5 Z" fill="#c3c3c3"/><path d="M6.5 0.5 L1 10.0" stroke="#ececec" stroke-width="1" fill="none"/><path d="M1 10.0 L6.5 19.5 V0.5" stroke="#8a8a8a" stroke-width="1" fill="none"/></svg>
<div style="left:991px;top:595px;width:7px;height:20px;background:#d3d3d3;"></div>
<svg style="left:991px;top:595px;" width="7" height="20" viewBox="0 0 7 20"><path d="M0.5 0.5 L6 10.0 L0.5 19.5 Z" fill="#c3c3c3"/><path d="M0.5 19.5 V0.5 L6 10.0" stroke="#ececec" stroke-width="1" fill="none"/><path d="M6 10.0 L0.5 19.5" stroke="#8a8a8a" stroke-width="1" fill="none"/></svg>
<div style="left:762px;top:596px;width:227px;height:18px;background:#919191;box-sizing:border-box;border-top:1px solid #858585;border-left:1px solid #858585;border-bottom:1px solid #bdbdbd;border-right:1px solid #c4c4c4;"></div>
<div style="left:751px;top:622px;width:259px;height:21px;background:#d3d3d3;"></div>
<svg style="left:866px;top:588px;" width="16" height="38" viewBox="0 0 16 38"><path d="M1 1 H13.8 L8.8 31 H6.6 Z" fill="#93c4f9"/><path d="M1 1.5 H13.8" stroke="#b5d8fc" stroke-width="1"/><path d="M7.5 31 V37" stroke="#7892b5" stroke-width="1"/></svg>
<svg style="left:0px;top:0px;pointer-events:none;" width="1034" height="774" viewBox="0 0 1034 774"><path d="M763.5 622v5M785.5 622v3M798.5 622v3M808.5 622v3M815.5 622v3M821.5 622v3M826.5 622v3M830.5 622v3M834.5 622v3M838.5 622v5M860.5 622v3M873.5 622v3M883.5 622v3M890.5 622v3M896.5 622v3M901.5 622v3M905.5 622v3M909.5 622v3M912.5 622v5M935.5 622v3M948.5 622v3M957.5 622v3M965.5 622v3M971.5 622v3M976.5 622v3M980.5 622v3M984.5 622v3M987.5 622v5" stroke="#707070" stroke-width="1" fill="none" shape-rendering="crispEdges"/></svg>
<span class="t" style="left:753.00px;top:630px;font-size:11.5px;line-height:11.5px;color:#7e7e7e;font-weight:bold;transform:scaleX(1.0214);">100</span>
<span class="t" style="left:825.20px;top:630px;font-size:11.5px;line-height:11.5px;color:#7e7e7e;font-weight:bold;transform:scaleX(1.0435);">1000</span>
<span class="t" style="left:895.00px;top:630px;font-size:11.5px;line-height:11.5px;color:#7e7e7e;font-weight:bold;transform:scaleX(1.0318);">10000</span>
<span class="t" style="left:966.60px;top:630px;font-size:11.5px;line-height:11.5px;color:#7e7e7e;font-weight:bold;transform:scaleX(1.0683);">100000</span>
<div style="left:9px;top:692px;width:1015px;height:73px;box-sizing:border-box;border:2px solid #dedede;box-shadow:1px 1px 0 #5a5a5a,inset 1px 1px 0 #5a5a5a;"></div>
<div style="left:127px;top:705px;width:79px;height:41px;box-sizing:border-box;border:1px solid #000;background:#b3b3b3;box-shadow:inset 2px 2px 0 #6a6a6a,inset -2px -2px 0 #e4e4e4;"></div>
<span class="t" style="left:148.55px;top:721px;font-size:12px;line-height:12px;color:#f00;font-weight:bold;transform:scaleX(1.0041);">Pause</span>
<div style="left:244px;top:705px;width:81px;height:41px;box-sizing:border-box;border:1px solid #000;background:#b3b3b3;box-shadow:inset 2px 2px 0 #e4e4e4,inset -2px -2px 0 #6a6a6a;"></div>
<span class="t" style="left:271.10px;top:714px;font-size:11px;line-height:11px;color:#000;font-weight:bold;transform:scaleX(0.9342);">Save</span>
<span class="t" style="left:271.35px;top:727px;font-size:11px;line-height:11px;color:#000;font-weight:bold;transform:scaleX(0.9857);">Data</span>
<div style="left:370px;top:708px;width:182px;height:20px;background:#333;box-shadow:inset 0 1px 0 #222;"></div>
<div style="left:552px;top:708px;width:2px;height:20px;background:#bfbfbf;"></div>
<svg style="left:363px;top:707px;" width="7" height="23" viewBox="0 0 7 23"><path d="M7 0 L0.5 11.5 L7 23 Z" fill="#8c8c8c"/><path d="M7 0 L0.5 11.5" stroke="#c8c8c8" stroke-width="0.9" fill="none"/><path d="M0.5 11.5 L7 23" stroke="#555" stroke-width="0.8" fill="none"/></svg>
<svg style="left:555px;top:707px;" width="8" height="23" viewBox="0 0 8 23"><path d="M0 0 L7 11.5 L0 23 Z" fill="#8c8c8c"/><path d="M0.3 23 V0 L7 11.5" stroke="#c4c4c4" stroke-width="0.9" fill="none"/><path d="M7 11.5 L0.3 23" stroke="#2a2a2a" stroke-width="1" stroke-dasharray="2 1" fill="none"/></svg>
<div style="left:369px;top:705px;width:8px;height:27px;background:#3c9af6;box-shadow:inset 1px 0 0 #7cc0ff,inset -1px -1px 0 #2a7ad8;"></div>
<div style="left:372px;top:706px;width:1px;height:25px;background:#a6d6ff;"></div>
<div style="left:373px;top:706px;width:1px;height:25px;background:#1f66c4;"></div>
<svg style="left:0px;top:0px;pointer-events:none;" width="1034" height="774" viewBox="0 0 1034 774"><path d="M373.5 733v5M378.5 733v3M387.5 733v3M396.5 733v3M405.5 733v3M414.5 733v5M423.5 733v3M432.5 733v3M441.5 733v3M451.5 733v3M460.5 733v5M469.5 733v3M478.5 733v3M487.5 733v3M496.5 733v3M505.5 733v5M514.5 733v3M524.5 733v3M533.5 733v3M542.5 733v3M551.5 733v5" stroke="#000" stroke-width="1" fill="none" shape-rendering="crispEdges"/></svg>
<span class="t" style="left:370.25px;top:741px;font-size:11.5px;line-height:11.5px;color:#000;transform:scaleX(0.8911);">1</span>
<span class="t" style="left:408.48px;top:741px;font-size:11.5px;line-height:11.5px;color:#000;transform:scaleX(0.8911);">10</span>
<span class="t" style="left:454.12px;top:741px;font-size:11.5px;line-height:11.5px;color:#000;transform:scaleX(0.8911);">20</span>
<span class="t" style="left:499.76px;top:741px;font-size:11.5px;line-height:11.5px;color:#000;transform:scaleX(0.8911);">30</span>
<span class="t" style="left:545.40px;top:741px;font-size:11.5px;line-height:11.5px;color:#000;transform:scaleX(0.8911);">40</span>
<span class="t" style="left:572.00px;top:711px;font-size:11px;line-height:11px;color:#000;font-weight:bold;transform:scaleX(1.0255);">Zoom</span>
<div style="left:653px;top:708px;width:193px;height:17px;background:#333;box-shadow:inset 0 1px 0 #222;"></div>
<div style="left:846px;top:708px;width:2px;height:17px;background:#bfbfbf;"></div>
<svg style="left:646px;top:707px;" width="7" height="20" viewBox="0 0 7 20"><path d="M7 0 L0.5 10.0 L7 20 Z" fill="#8c8c8c"/><path d="M7 0 L0.5 10.0" stroke="#c8c8c8" stroke-width="0.9" fill="none"/><path d="M0.5 10.0 L7 20" stroke="#555" stroke-width="0.8" fill="none"/></svg>
<svg style="left:849px;top:707px;" width="8" height="20" viewBox="0 0 8 20"><path d="M0 0 L7 10.0 L0 20 Z" fill="#8c8c8c"/><path d="M0.3 20 V0 L7 10.0" stroke="#c4c4c4" stroke-width="0.9" fill="none"/><path d="M7 10.0 L0.3 20" stroke="#2a2a2a" stroke-width="1" stroke-dasharray="2 1" fill="none"/></svg>
<div style="left:652px;top:705px;width:8px;height:24px;background:#3c9af6;box-shadow:inset 1px 0 0 #7cc0ff,inset -1px -1px 0 #2a7ad8;"></div>
<div style="left:655px;top:706px;width:1px;height:22px;background:#a6d6ff;"></div>
<div style="left:656px;top:706px;width:1px;height:22px;background:#1f66c4;"></div>
<svg style="left:0px;top:0px;pointer-events:none;" width="1034" height="774" viewBox="0 0 1034 774"><path d="M656.5 730v5M665.5 730v3M675.5 730v3M684.5 730v3M694.5 730v5M703.5 730v3M712.5 730v3M722.5 730v3M731.5 730v5M741.5 730v3M750.5 730v3M759.5 730v3M769.5 730v5M778.5 730v3M788.5 730v3M797.5 730v3M806.5 730v5M816.5 730v3M825.5 730v3M835.5 730v3M844.5 730v5" stroke="#000" stroke-width="1" fill="none" shape-rendering="crispEdges"/></svg>
<span class="t" style="left:653.00px;top:738px;font-size:11.5px;line-height:11.5px;color:#000;transform:scaleX(0.9067);">0</span>
<span class="t" style="left:686.15px;top:738px;font-size:11.5px;line-height:11.5px;color:#000;transform:scaleX(0.9194);">0.2</span>
<span class="t" style="left:723.75px;top:738px;font-size:11.5px;line-height:11.5px;color:#000;transform:scaleX(0.9194);">0.4</span>
<span class="t" style="left:761.35px;top:738px;font-size:11.5px;line-height:11.5px;color:#000;transform:scaleX(0.9194);">0.6</span>
<span class="t" style="left:798.95px;top:738px;font-size:11.5px;line-height:11.5px;color:#000;transform:scaleX(0.9194);">0.8</span>
<span class="t" style="left:841.00px;top:738px;font-size:11.5px;line-height:11.5px;color:#000;transform:scaleX(0.9067);">1</span>
<span class="t" style="left:861.60px;top:711px;font-size:11px;line-height:11px;color:#000;font-weight:bold;transform:scaleX(0.9680);">Position</span>
</div></body></html>
